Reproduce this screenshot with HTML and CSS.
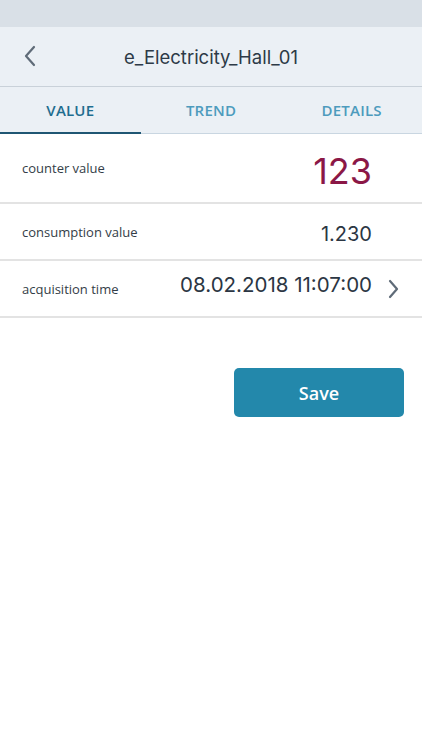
FILE: index.html
```html
<!DOCTYPE html>
<html>
<head>
<meta charset="utf-8">
<link rel="stylesheet" href="styles.css">
</head>
<body>
<div class="status"></div>
<div class="nav">
  <svg class="back" width="14" height="22" viewBox="0 0 14 22"><path d="M11 2 L3 11 L11 20" fill="none" stroke="#5f6b78" stroke-width="2.2" stroke-linecap="round" stroke-linejoin="round"/></svg>
  <div class="title">e_Electricity_Hall_01</div>
</div>
<div class="tabs">
  <div class="tab active">VALUE</div>
  <div class="tab">TREND</div>
  <div class="tab">DETAILS</div>
</div>
<div class="list">
  <div class="row row-big">
    <div class="label">counter value</div>
    <div class="value counter">123</div>
  </div>
  <div class="row">
    <div class="label">consumption value</div>
    <div class="value cons">1.230</div>
  </div>
  <div class="row">
    <div class="label">acquisition time</div>
    <div class="value date">08.02.2018 11:07:00</div>
    <svg class="chev" width="12" height="20" viewBox="0 0 12 20"><path d="M3 2 L10 10 L3 18" fill="none" stroke="#5f6b78" stroke-width="2.2" stroke-linecap="round" stroke-linejoin="round"/></svg>
  </div>
</div>
<div class="actions">
  <button class="save">Save</button>
</div>
</body>
</html>
```
FILE: styles.css
```css
html, body { margin: 0; padding: 0; background: #ffffff; }
body { width: 422px; height: 750px; overflow: hidden; font-family: "Open Sans", sans-serif; }
.status { height: 27px; background: #d9e0e7; }
.nav {
  height: 59px; background: #ebf0f5; border-bottom: 1px solid #c9d1d9;
  display: flex; align-items: center; justify-content: center; position: relative;
}
.back { position: absolute; left: 23px; top: 18px; }
.title { font-family: Inter, "Liberation Sans", sans-serif; font-size: 18.5px; color: #2d3a47; }
.tabs { display: flex; height: 46px; background: #ebf0f5; border-bottom: 1px solid #c9d6e1; }
.tab {
  flex: 1; display: flex; align-items: center; justify-content: center;
  font-size: 15px; font-weight: 600; color: #4d9bbd; letter-spacing: 0.2px;
  border-bottom: 2px solid transparent; margin-bottom: -1px;
}
.tab.active { color: #1f6d8f; border-bottom-color: #1f5673; }
.list { display: flex; flex-direction: column; }
.row {
  display: flex; align-items: center; height: 55px; border-bottom: 2px solid #e3e3e3;
  padding: 0 50px 0 22px; position: relative;
}
.row-big { height: 68px; }
.label { flex: 1; font-size: 13px; color: #333d47; }
.value { font-family: Inter, "Liberation Sans", sans-serif; font-size: 20px; color: #2b3643; }
.counter { font-size: 36px; color: #8b1746; margin-top: 6px; }
.cons { margin-top: 5px; }
.date { font-size: 20.5px; margin-top: -9px; }
.chev { position: absolute; right: 23px; top: 18px; }
.actions { display: flex; justify-content: flex-end; padding: 50px 18px 0 0; }
.save {
  width: 170px; height: 49px; border: none; border-radius: 5px; background: #2388ab;
  color: #ffffff; font-family: "Open Sans", sans-serif; font-size: 18px; font-weight: 600;
}
```
